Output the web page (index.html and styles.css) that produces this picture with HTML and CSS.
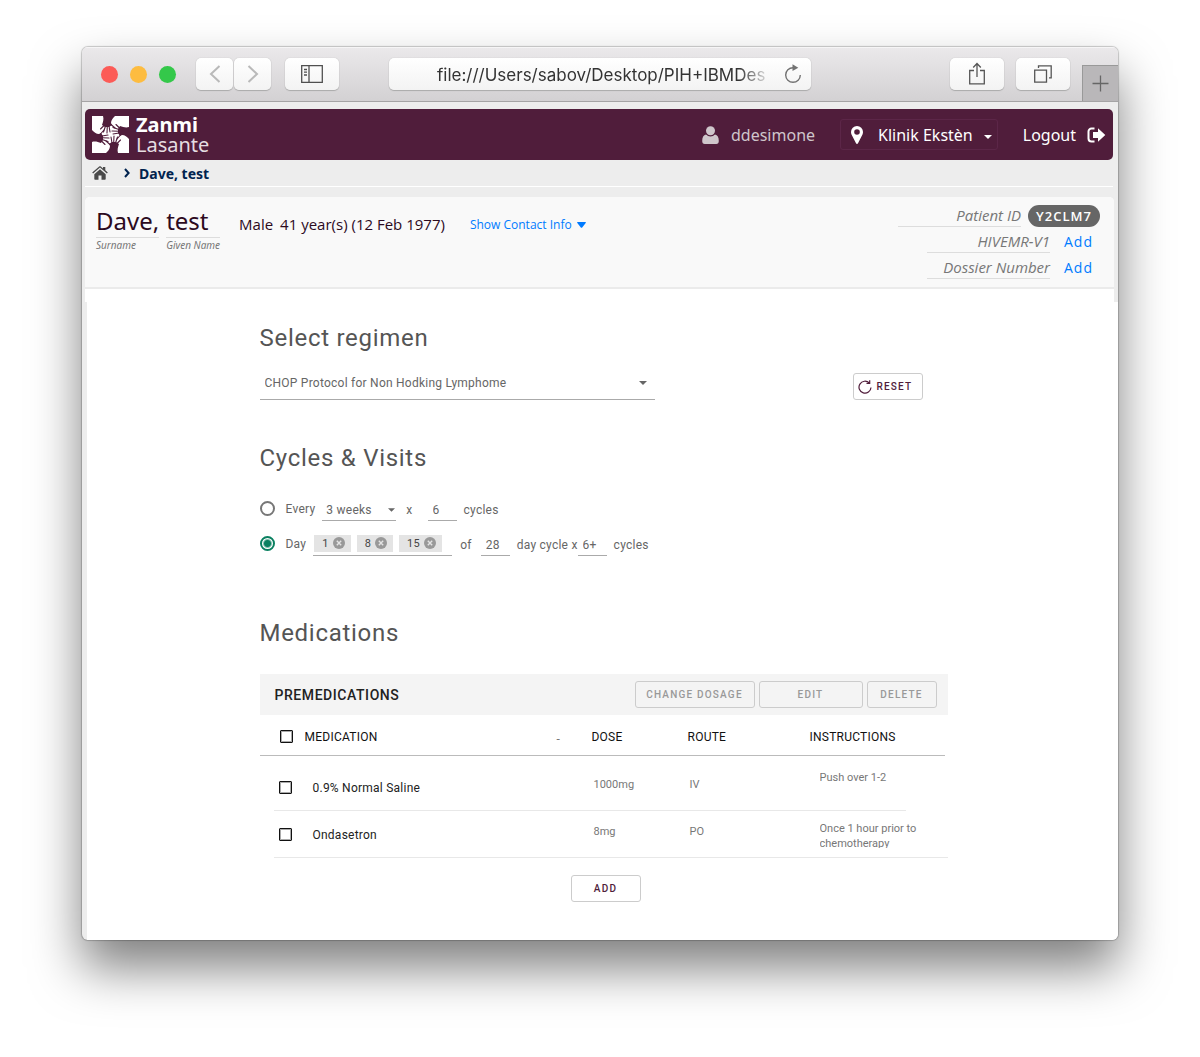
FILE: index.html
```html
<!DOCTYPE html>
<html lang="en">
<head>
<meta charset="utf-8">
<meta name="viewport" content="width=device-width, initial-scale=1">
<title>Zanmi Lasante</title>
<link rel="stylesheet" href="styles.css">
</head>
<body>
<div class="window">
  <div class="toolbar">
    <div class="toolbar-side">
      <div class="lights"><span class="light red"></span><span class="light yellow"></span><span class="light green"></span></div>
      <div class="nav-pair">
        <button class="tool nav" type="button" aria-label="Back"><svg width="12" height="20" viewBox="0 0 12 20" fill="none" stroke="#b9b9b9" stroke-width="2"><path d="M10.500 2 2 10l8.500 8"/></svg></button>
        <button class="tool nav" type="button" aria-label="Forward"><svg width="12" height="20" viewBox="0 0 12 20" fill="none" stroke="#b9b9b9" stroke-width="2"><path d="m1.500 2 8.500 8-8.500 8"/></svg></button>
      </div>
      <button class="tool" type="button" aria-label="Sidebar"><svg width="22" height="18" viewBox="0 0 22 18" fill="none" stroke="#505050" stroke-width="1.300"><path d="M.7.700h20.600v16.600H.7zM8 .7v16.600M3 4.500h3M3 7.200h3M3 10h3"/></svg></button>
    </div>
    <div class="address">
      <input class="url" type="text" aria-label="Address" value="file:///Users/sabov/Desktop/PIH+IBMDesign">
      <button class="reload" type="button" aria-label="Reload"><svg width="20" height="20" viewBox="0 0 20 20" fill="none" stroke="#737373" stroke-width="1.400"><path d="M10 3.700A7.300 7.300 0 1 0 17.300 11"/><path d="M9.500.3v6.800L15.300 3.700z" fill="#737373" stroke="none"/></svg></button>
    </div>
    <div class="toolbar-side end">
      <button class="tool" type="button" aria-label="Share"><svg width="18" height="24" viewBox="0 0 18 24" fill="none" stroke="#555" stroke-width="1.300"><path d="M6 8.500H1.700v13.300h14.600V8.500H12M9 15V2M5.200 5.500 9 1.500l3.800 4"/></svg></button>
      <button class="tool" type="button" aria-label="Show tabs"><svg width="18" height="18" viewBox="0 0 18 18" fill="none" stroke="#555" stroke-width="1.300"><path d="M.7 5.200h11.800v12H.7zM4.500 3V.8h12.700v12H15"/></svg></button>
      <button class="new-tab" type="button" aria-label="New tab"><svg width="17" height="17" viewBox="0 0 17 17" stroke="#666" stroke-width="1.300"><path d="M8.500.5v16M.5 8.500h16"/></svg></button>
    </div>
  </div>

  <header class="app-bar">
    <a class="brand" href="#">
      <svg width="37" height="37" viewBox="0 0 37 37">
        <defs>
          <g id="hand">
            <path fill="#501d3b" d="M11 0h12c-2 2-4 4-4 7l1 2-3 2h-4l-3-2c1-3 2-6 1-9z"/>
            <path fill="none" stroke="#501d3b" stroke-width="1.100" stroke-linecap="round" d="M12 9.500 8.500 13M13.500 10l-2 6M15.300 10l-.3 7M17 10l1 6M19 8.500l4 3.500"/>
          </g>
        </defs>
        <path fill="#fff" d="M0 0h37v37H0z"/>
        <use href="#hand"/>
        <use href="#hand" transform="rotate(90 18.500 18.500)"/>
        <use href="#hand" transform="rotate(180 18.500 18.500)"/>
        <use href="#hand" transform="rotate(270 18.500 18.500)"/>
      </svg>
      <span class="brand-name"><strong>Zanmi</strong><span>Lasante</span></span>
    </a>
    <nav class="account">
      <a class="user" href="#"><svg width="17" height="18" viewBox="0 0 17 18" fill="#cfc6cb"><circle cx="8.500" cy="4.700" r="4.500"/><path d="M4 8.600C1.500 9 .2 11.500.2 15c0 2 .9 3 2.500 3h11.600c1.600 0 2.500-1 2.500-3 0-3.500-1.300-6-3.800-6.400a6.400 6.400 0 0 1-9 0z"/></svg>ddesimone</a>
      <button class="location" type="button"><svg width="12" height="18" viewBox="0 0 12 18" fill="#fff"><path fill-rule="evenodd" d="M6 0a6 6 0 0 0-6 6c0 1 .2 1.700.5 2.400L5 17.300c.4.900 1.600.9 2 0l4.500-8.900c.3-.7.5-1.400.5-2.400a6 6 0 0 0-6-6zm0 3.200a2.800 2.800 0 1 1 0 5.600 2.800 2.800 0 0 1 0-5.600z"/></svg><span>Klinik Ekstèn</span><svg width="8" height="4" viewBox="0 0 8 4" fill="#fff"><path d="M0 0h8L4 4z"/></svg></button>
      <a class="logout" href="#">Logout <svg width="19" height="16" viewBox="0 0 19 16"><path d="M7.500 1.500h-3a3 3 0 0 0-3 3v7a3 3 0 0 0 3 3h3" fill="none" stroke="#fff" stroke-width="2"/><path d="M11 1.200 18.300 8 11 14.800V11H6V5h5z" fill="#fff"/></svg></a>
    </nav>
  </header>

  <nav class="crumbs" aria-label="Breadcrumb">
    <a href="#" aria-label="Home"><svg width="16" height="14" viewBox="0 0 16 14" fill="#4a4a4a"><path d="m8 3.300 5.700 4.900V13c0 .5-.3.800-.8.800H9.500V9.600h-3v4.200H3.100c-.5 0-.8-.3-.8-.8V8.200z"/><path d="M7.200.5c.5-.4 1.100-.4 1.600 0L11 2.400V1h2.300v3.300l2.500 2.200-.9 1L8 1.600 1.100 7.500l-.9-1z"/></svg></a>
    <svg width="6" height="10" viewBox="0 0 6 10" fill="none" stroke="#00234f" stroke-width="2"><path d="m1 1 3.600 4L1 9"/></svg>
    <span>Dave, test</span>
  </nav>

  <section class="patient-area">
    <div class="patient">
      <div class="names">
        <div class="name"><span class="value">Dave,</span><span class="caption">Surname</span></div>
        <div class="name"><span class="value">test</span><span class="caption">Given Name</span></div>
      </div>
      <div class="facts"><span>Male</span><span>41 year(s) (12 Feb 1977)</span></div>
      <a class="contact" href="#">Show Contact Info <svg width="9" height="6" viewBox="0 0 9 6" fill="#007bff"><path d="M.5 0h8q.8.500 0 1.200L5.200 5.500q-.7.600-1.400 0L.5 1.200Q-.3.500.5 0z"/></svg></a>
      <div class="ids">
        <div class="id-row primary"><span class="id-label">Patient ID</span><span class="pill">Y2CLM7</span></div>
        <div class="id-row"><span class="id-label">HIVEMR-V1</span><a href="#">Add</a></div>
        <div class="id-row"><span class="id-label">Dossier Number</span><a href="#">Add</a></div>
      </div>
    </div>
  </section>

  <main class="content">
    <form class="order">
      <h2><label for="regimen">Select regimen</label></h2>
      <div class="regimen-row">
        <span class="select regimen"><select id="regimen"><option>CHOP Protocol for Non Hodking Lymphome</option></select><svg width="8" height="4" viewBox="0 0 8 4" fill="#666"><path d="M0 0h8L4 4z"/></svg></span>
        <button class="btn reset" type="reset"><svg width="14" height="14" viewBox="0 0 14 14" fill="none" stroke="#501d3b" stroke-width="1.200"><path d="M11.300 3A6 6 0 1 0 13 7.500"/><path d="M8.500 3.300h3.200V.3"/></svg>RESET</button>
      </div>

      <h2>Cycles &amp; Visits</h2>
      <div class="cycle-row">
        <input type="radio" name="cycle" id="every"><label class="lead" for="every">Every</label>
        <span class="select weeks"><select aria-label="Interval"><option>3 weeks</option></select><svg width="7" height="4" viewBox="0 0 8 4" fill="#666"><path d="M0 0h8L4 4z"/></svg></span>
        <span class="times">x</span>
        <input class="num" id="n1" type="text" value="6" size="2">
        <label class="unit" for="n1">cycles</label>
      </div>
      <div class="cycle-row">
        <input type="radio" name="cycle" id="day" checked><label class="lead" for="day">Day</label>
        <span class="chips">
          <button class="chip" type="button">1<svg width="12" height="12" viewBox="0 0 12 12"><circle cx="6" cy="6" r="6" fill="#999"/><path d="m3.800 3.800 4.400 4.400m0-4.400L3.800 8.200" stroke="#e4e4e4" stroke-width="1.400"/></svg></button>
          <button class="chip" type="button">8<svg width="12" height="12" viewBox="0 0 12 12"><circle cx="6" cy="6" r="6" fill="#999"/><path d="m3.800 3.800 4.400 4.400m0-4.400L3.800 8.200" stroke="#e4e4e4" stroke-width="1.400"/></svg></button>
          <button class="chip" type="button">15<svg width="12" height="12" viewBox="0 0 12 12"><circle cx="6" cy="6" r="6" fill="#999"/><path d="m3.800 3.800 4.400 4.400m0-4.400L3.800 8.200" stroke="#e4e4e4" stroke-width="1.400"/></svg></button>
        </span>
        <label class="of" for="n2">of</label>
        <input class="num" id="n2" type="text" value="28" size="2">
        <label class="unit" for="n3">day cycle x</label>
        <input class="num" id="n3" type="text" value="6+" size="2">
        <span class="unit">cycles</span>
      </div>

      <h2 class="meds-title">Medications</h2>
      <div class="group-bar">
        <h3>PREMEDICATIONS</h3>
        <div class="actions">
          <button class="btn muted dosage" type="button">CHANGE DOSAGE</button>
          <button class="btn muted edit" type="button">EDIT</button>
          <button class="btn muted" type="button">DELETE</button>
        </div>
      </div>
      <table class="meds">
        <colgroup><col class="c-check"><col><col class="c-sort"><col class="c-dose"><col class="c-route"><col class="c-inst"></colgroup>
        <thead>
          <tr><th><input type="checkbox" aria-label="Select all"></th><th>MEDICATION</th><th class="sort">-</th><th>DOSE</th><th>ROUTE</th><th>INSTRUCTIONS</th></tr>
        </thead>
        <tbody>
          <tr class="first"><td><input type="checkbox" id="m1"></td><td colspan="2" class="drug"><label for="m1">0.9% Normal Saline</label></td><td class="detail">1000mg</td><td class="detail">IV</td><td class="note"><div>Push over 1-2</div></td></tr>
          <tr><td><input type="checkbox" id="m2"></td><td colspan="2" class="drug"><label for="m2">Ondasetron</label></td><td class="detail">8mg</td><td class="detail">PO</td><td class="note"><div>Once 1 hour prior to chemotherapy</div></td></tr>
        </tbody>
      </table>
      <div class="add-row"><button class="btn" type="button">ADD</button></div>
    </form>
  </main>
</div>
</body>
</html>
```
FILE: styles.css
```css
* { box-sizing: border-box; }
body {
  margin: 0;
  padding: 47px 82px 117px;
  background: #fff;
  font-family: "Open Sans", sans-serif;
  color: #333;
}
button, input, select { font: inherit; color: inherit; letter-spacing: inherit; margin: 0; }
button { padding: 0; cursor: pointer; }
a { text-decoration: none; color: #007bff; }
svg { display: block; flex: none; }

.window {
  background: #ededed;
  border-radius: 6px;
  overflow: hidden;
  box-shadow: 0 0 1px 1px rgba(0, 0, 0, .2), 0 28px 50px rgba(0, 0, 0, .5);
}

/* Browser toolbar */
.toolbar {
  display: grid;
  grid-template-columns: 1fr minmax(0, 422px) 1fr;
  align-items: center;
  height: 55px;
  background: linear-gradient(#ebe9eb, #d3d1d3);
  border-bottom: 1px solid #a5a4a5;
  box-shadow: inset 0 1px #f6f5f6;
}
.toolbar-side { display: flex; align-items: center; gap: 14px; height: 100%; padding-left: 19px; }
.toolbar-side.end { justify-content: flex-end; gap: 12px; padding-left: 0; }
.lights { display: flex; gap: 12px; margin-right: 6px; }
.light { width: 17px; height: 17px; border-radius: 50%; }
.red { background: #fc5b57; }
.yellow { background: #fdbc40; }
.green { background: #34c84a; }
.nav-pair { display: flex; gap: 1px; }
.tool {
  display: flex;
  align-items: center;
  justify-content: center;
  width: 54px;
  height: 32px;
  border: 0;
  border-radius: 5px;
  background: linear-gradient(#fff, #f3f3f3);
  box-shadow: 0 0 1px #aaa, 0 1px 1px #aaa;
}
.tool.nav { width: 37px; }
.new-tab {
  display: flex;
  align-items: center;
  justify-content: center;
  align-self: flex-end;
  width: 36px;
  height: 36px;
  border: solid #999;
  border-width: 1px 0 0 1px;
  background: #b9b7b9;
}
.address {
  display: flex;
  align-items: center;
  height: 32px;
  padding: 0 8px 0 48px;
  border-radius: 5px;
  background: linear-gradient(#fff, #f3f3f3);
  box-shadow: 0 0 1px #aaa, 0 1px 1px #aaa;
}
.url {
  flex: 1;
  min-width: 0;
  padding: 2px 0 0;
  border: 0;
  background: none;
  font-family: Inter, sans-serif;
  font-size: 17px;
  color: #333;
  mask-image: linear-gradient(90deg, #000 92%, transparent 102%);
}
.reload { margin-left: 18px; border: 0; background: none; }

/* Application header */
.app-bar {
  display: flex;
  align-items: center;
  justify-content: space-between;
  height: 51px;
  margin: 7px 5px 0 3px;
  padding: 0 7px;
  border-radius: 5px;
  background: #501d3b;
  font-family: "Noto Sans", sans-serif;
  font-size: 16px;
}
.brand { display: flex; align-items: center; gap: 7px; color: #fff; }
.brand-name { display: flex; flex-direction: column; font-size: 20px; line-height: 20px; }
.brand-name span { color: #e6dde2; }
.account { display: flex; align-items: center; }
.account a, .location { display: flex; align-items: center; color: #fff; }
.account .user { gap: 12px; margin-right: 25px; color: #cfc6cb; }
.location {
  gap: 15px;
  height: 31px;
  margin-right: 25px;
  padding: 0 5px 0 10px;
  border: 1px solid #5c2648;
  border-radius: 3px;
  background: none;
}
.location svg:last-child { margin: 4px 0 0 -4px; }
.account .logout { gap: 11px; }

.crumbs {
  display: flex;
  align-items: center;
  height: 27px;
  margin: 0 5px 0 3px;
  padding: 0 7px;
  border-bottom: 1px solid #fff;
  font-family: "Noto Sans", sans-serif;
  font-size: 14px;
  font-weight: 700;
  color: #00234f;
}
.crumbs > svg { margin: 0 9px 0 16px; }

/* Patient banner */
.patient-area { margin: 10px 4px 0 3px; padding-bottom: 13px; border-radius: 5px 5px 0 0; background: #fff; }
.patient {
  display: flex;
  align-items: flex-start;
  height: 92px;
  padding: 8px 14px 0 11px;
  border-bottom: 2px solid #ebebeb;
  border-radius: 5px 5px 0 0;
  background: #f9f9f9;
  color: #2c0a1e;
}
.names { display: flex; gap: 7px; font-family: "Noto Sans", sans-serif; }
.value { display: block; font-size: 24px; line-height: 32px; }
.caption {
  display: block;
  border-top: 1px solid #ddd;
  font-size: 10px;
  line-height: 14px;
  font-style: italic;
  color: #777;
}
.facts { display: flex; gap: 7px; margin: 8px 0 0 19px; font-size: 15px; line-height: 22px; }
.contact { display: flex; align-items: center; gap: 5px; margin: 9px 0 0 25px; font-size: 12px; line-height: 22px; }
.ids { display: flex; flex-direction: column; align-items: flex-end; gap: 4px; margin-left: auto; font-size: 14px; }
.id-row { display: flex; gap: 14px; padding-right: 7px; line-height: 22px; letter-spacing: 1px; }
.id-row.primary { gap: 7px; padding-right: 0; }
.id-label { width: 123px; border-bottom: 1px solid #ddd; text-align: right; font-size: 15px; line-height: 21px; font-style: italic; color: #777; letter-spacing: 0; }
.pill { width: 72px; border-radius: 11px; background: #666; color: #fff; font-size: 13px; font-weight: 600; text-align: center; }

/* Order form */
.content { margin-left: 5px; padding: 20px 0 38px 2px; background: #fff; }
.order {
  max-width: 688px;
  margin: 0 auto;
  font-family: Roboto, sans-serif;
  font-size: 12px;
  letter-spacing: .02em;
  color: #666;
}
h2 { margin: 0; font-size: 24px; line-height: 32px; font-weight: 400; color: #555; letter-spacing: .03em; }
.select { display: grid; align-items: center; border-bottom: 1px solid #aaa; }
.select > * { grid-area: 1 / 1; }
.select select { appearance: none; width: 100%; border: 0; padding: 0; background: none; outline: 0; }
.select svg { justify-self: end; pointer-events: none; }
.regimen-row { display: flex; align-items: flex-end; justify-content: space-between; margin: 12px 25px 42px 0; }
.regimen { width: 395px; height: 34px; padding: 0 8px 0 5px; }
.btn {
  display: flex;
  align-items: center;
  justify-content: center;
  gap: 5px;
  width: 70px;
  height: 27px;
  border: 1px solid #ccc;
  border-radius: 3px;
  background: #fff;
  color: #501d3b;
  font-size: 10px;
  font-weight: 500;
  letter-spacing: .12em;
}
.btn.reset { justify-content: flex-start; padding-left: 4px; }
.btn.muted { background: #f4f4f4; color: #999; }

.cycle-row { display: flex; align-items: center; height: 35px; }
h2 + .cycle-row { margin-top: 17px; }
input[type="radio"] {
  appearance: none;
  width: 15px;
  height: 15px;
  border: 2px solid #777;
  border-radius: 50%;
}
input[type="radio"]:checked { border-color: #0a8060; background: radial-gradient(#0a8060 3px, #fff 5px); }
.lead { margin: 0 7px 0 11px; }
.weeks { width: 74px; height: 24px; padding: 3px 1px 0 4px; }
.times { margin: 0 15px 0 10px; }
.num { width: 29px; height: 24px; padding: 3px 0 0 5px; border: 0; border-bottom: 1px solid #aaa; background: none; }
.unit { margin-left: 7px; }
.unit, .of, .times { padding-top: 3px; }
.chips { display: flex; gap: 6px; width: 139px; height: 24px; padding: 3px 0 0 1px; border-bottom: 1px solid #aaa; }
.chip {
  display: flex;
  align-items: center;
  gap: 4px;
  height: 17px;
  padding: 0 6px 0 8px;
  border: 0;
  background: #e4e4e4;
  color: #444;
  font-size: 11px;
}
.of { margin: 0 9px 0 8px; }

.meds-title { margin: 56px 0 25px; }
.group-bar { display: flex; align-items: center; justify-content: space-between; height: 41px; padding: 0 11px 0 15px; background: #f4f4f4; }
h3 { margin: 0; font-size: 14px; font-weight: 500; color: #222; letter-spacing: .04em; }
.actions { display: flex; gap: 4px; }
.dosage { width: 120px; }
.edit { width: 104px; }

.meds { width: 100%; border-collapse: collapse; table-layout: fixed; }
.c-check { width: 45px; }
.c-sort { width: 35px; }
.c-dose { width: 96px; }
.c-route { width: 122px; }
.c-inst { width: 138px; }
.meds th, .meds td { padding: 0; text-align: left; font-weight: 400; vertical-align: top; line-height: 16px; }
.meds th { height: 41px; padding-top: 2px; vertical-align: middle; color: #111; }
.meds th.sort { padding-top: 6px; color: #777; }
.meds th:first-child { padding-left: 20px; }
.meds td:first-child { padding: 17px 0 0 19px; }
thead tr { background: linear-gradient(#bbb, #bbb) 0 100% / calc(100% - 3px) 1px no-repeat; }
tbody tr { height: 47px; background: linear-gradient(#e8e8e8, #e8e8e8) 14px 100% / 100% 1px no-repeat; }
tbody .first { height: 55px; background-size: calc(100% - 56px) 1px; }
.meds .drug { padding: 16px 0 0 8px; color: #222; }
.meds .detail { padding: 13px 0 0 2px; font-size: 11px; color: #777; letter-spacing: 0; }
.meds .note { padding: 10px 0 0 10px; font-size: 11px; line-height: 15px; color: #777; letter-spacing: 0; }
.note div { max-height: 27px; overflow: hidden; }
.meds .first td { padding-top: 24px; }
.meds .first td:first-child { padding-top: 25px; }
.meds .first .detail { padding-top: 21px; }
.meds .first .note { padding-top: 14px; }
input[type="checkbox"] {
  appearance: none;
  display: block;
  width: 13px;
  height: 13px;
  border: 1px solid #111;
  border-radius: 1px;
  box-shadow: inset 0 0 0 1px #aaa;
}
.add-row { display: flex; justify-content: center; margin: 17px 0 0 4px; }
```
